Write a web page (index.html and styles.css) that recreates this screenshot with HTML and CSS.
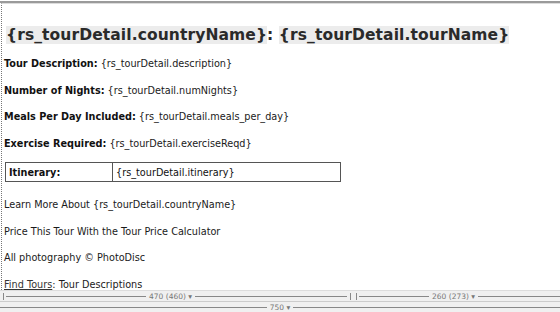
FILE: index.html
```html
<!DOCTYPE html>
<html lang="en">
<head>
    <meta charset="UTF-8">
    <title>Tour Detail</title>
    <link rel="stylesheet" href="styles.css">
</head>
<body>
    <div class="page">
        <div class="content">
            <h1 class="title"><span class="bind">{rs_tourDetail.countryName}</span>: <span class="bind">{rs_tourDetail.tourName}</span></h1>
            <p class="field"><b>Tour Description:</b> {rs_tourDetail.description}</p>
            <p class="field"><b>Number of Nights:</b> {rs_tourDetail.numNights}</p>
            <p class="field"><b>Meals Per Day Included:</b> {rs_tourDetail.meals_per_day}</p>
            <p class="field"><b>Exercise Required:</b> {rs_tourDetail.exerciseReqd}</p>
            <table class="itinerary">
                <tr>
                    <td class="label">Itinerary:</td>
                    <td>{rs_tourDetail.itinerary}</td>
                </tr>
            </table>
            <p class="field">Learn More About {rs_tourDetail.countryName}</p>
            <p class="field">Price This Tour With the Tour Price Calculator</p>
            <p class="field">All photography &copy; PhotoDisc</p>
            <p class="field"><a href="#">Find Tours</a>: Tour Descriptions</p>
        </div>
        <div class="ruler">
            <div class="ruler-row">
                <span class="tick"></span>
                <span class="line left"></span>
                <span class="size">470 (460) &#9662;</span>
                <span class="line mid"></span>
                <span class="tick"></span><span class="tick"></span>
                <span class="line right"></span>
                <span class="size">260 (273) &#9662;</span>
                <span class="line"></span>
            </div>
            <div class="ruler-row">
                <span class="line"></span>
                <span class="size">750 &#9662;</span>
                <span class="line"></span>
            </div>
        </div>
    </div>
</body>
</html>
```

FILE: styles.css
```css
body, html {
    margin: 0;
    padding: 0;
    background-color: #ffffff;
    color: #111;
    font-family: "DejaVu Sans", Verdana, sans-serif;
    overflow: hidden;
}
.page {
    height: 311px;
    display: flex;
    flex-direction: column;
    border-top: 2px solid #9a9a9a;
    box-sizing: border-box;
    margin-top: 1px;
}
.content {
    flex: 1;
    min-height: 0;
    overflow: hidden;
    border-left: 1px dotted #777;
    border-top: 1px solid #dcdcdc;
    margin-left: 1px;
    padding: 22px 0 0 2px;
}
.title {
    font-size: 15.5px;
    font-weight: bold;
    color: #2a2a2a;
    margin: 0 0 13px 2px;
    letter-spacing: 0.1px;
}
.bind {
    background-color: #ececec;
}
.field {
    font-size: 9.7px;
    margin: 0 0 13.5px 0;
    line-height: 13px;
    color: #1a1a1a;
}
.field b {
    color: #111;
}
.field a {
    color: #333;
}
.itinerary {
    width: 336px;
    border: 1px solid #555;
    border-collapse: collapse;
    margin: -1px 0 16px 1px;
    font-size: 9.7px;
}
.itinerary td {
    border: 1px solid #555;
    height: 18px;
    padding: 0 3px;
}
.itinerary .label {
    width: 100px;
    font-weight: bold;
}
.ruler {
    flex-shrink: 0;
    background-color: #f0f0f0;
    border-top: 1px solid #ddd;
    padding: 1px 0 0 0;
    height: 22px;
    box-sizing: border-box;
}
.ruler-row {
    display: flex;
    align-items: center;
    height: 9px;
    font-size: 7.5px;
    color: #777;
}
.ruler-row + .ruler-row {
    border-top: 1px solid #ccc;
    height: 10px;
}
.line {
    flex: 1;
    border-top: 1px solid #888;
}
.line.left {
    flex: 0 0 140px;
}
.line.mid {
    flex: 0 0 152px;
}
.line.right {
    flex: 0 0 70px;
}
.size {
    padding: 0 3px;
    white-space: nowrap;
}
.tick {
    width: 1px;
    height: 7px;
    background-color: #888;
    margin: 0 2px 0 3px;
}
```
